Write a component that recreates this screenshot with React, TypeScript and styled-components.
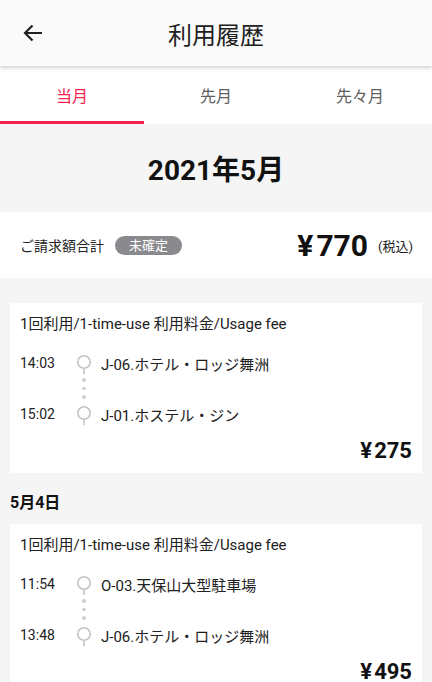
import styled, { createGlobalStyle } from "styled-components";

const GlobalStyle = createGlobalStyle`
  body {
    margin: 0;
    background: #f5f5f5;
    font-family: Roboto, "Noto Sans CJK JP", sans-serif;
    color: #212121;
  }
`;

type Ride = {
  title: string;
  from: { time: string; place: string };
  to: { time: string; place: string };
  price: string;
};

const days: { label?: string; rides: Ride[] }[] = [
  {
    rides: [
      {
        title: "1回利用/1-time-use 利用料金/Usage fee",
        from: { time: "14:03", place: "J-06.ホテル・ロッジ舞洲" },
        to: { time: "15:02", place: "J-01.ホステル・ジン" },
        price: "275",
      },
    ],
  },
  {
    label: "5月4日",
    rides: [
      {
        title: "1回利用/1-time-use 利用料金/Usage fee",
        from: { time: "11:54", place: "O-03.天保山大型駐車場" },
        to: { time: "13:48", place: "J-06.ホテル・ロッジ舞洲" },
        price: "495",
      },
    ],
  },
];

function Pin() {
  return (
    <svg width="16" height="22" viewBox="0 0 16 22">
      <circle cx="8" cy="8" r="6.2" fill="none" stroke="#c4c4c4" strokeWidth="1.6" />
      <line x1="8" y1="14.2" x2="8" y2="20" stroke="#c4c4c4" strokeWidth="1.6" />
    </svg>
  );
}

export default function App() {
  return (
    <>
      <GlobalStyle />
      <Page>
        <Header>
          <BackButton>
            <svg width="24" height="24" viewBox="0 0 24 24">
              <path
                d="M21 12H4M11.5 4.5L4 12l7.5 7.5"
                fill="none"
                stroke="#212121"
                strokeWidth="2.2"
              />
            </svg>
          </BackButton>
          <Title>利用履歴</Title>
        </Header>
        <Tabs>
          <Tab active>当月</Tab>
          <Tab>先月</Tab>
          <Tab>先々月</Tab>
        </Tabs>
        <Month>2021年5月</Month>
        <Summary>
          <SummaryLabel>ご請求額合計</SummaryLabel>
          <Badge>未確定</Badge>
          <Total>
            <span>¥</span>770
          </Total>
          <Tax>(税込)</Tax>
        </Summary>
        <List>
          {days.map((day, i) => (
            <DayGroup key={i}>
              {day.label && <DayLabel>{day.label}</DayLabel>}
              {day.rides.map((ride, j) => (
                <Card key={j}>
                  <CardTitle>{ride.title}</CardTitle>
                  <Stop>
                    <Time>{ride.from.time}</Time>
                    <Pin />
                    <Place>{ride.from.place}</Place>
                  </Stop>
                  <Dots>
                    <i />
                    <i />
                    <i />
                  </Dots>
                  <Stop>
                    <Time>{ride.to.time}</Time>
                    <Pin />
                    <Place>{ride.to.place}</Place>
                  </Stop>
                  <Price>
                    <span>¥</span>
                    {ride.price}
                  </Price>
                </Card>
              ))}
            </DayGroup>
          ))}
        </List>
      </Page>
    </>
  );
}

const Page = styled.div`
  width: 432px;
  min-height: 682px;
  background: #f5f5f5;
  overflow: hidden;
`;

const Header = styled.div`
  position: relative;
  height: 66px;
  background: #fafafa;
  display: flex;
  align-items: center;
  justify-content: center;
  box-shadow: 0 2px 4px rgba(0, 0, 0, 0.18);
  z-index: 1;
`;

const BackButton = styled.div`
  position: absolute;
  left: 21px;
  top: 21px;
  width: 24px;
  height: 24px;
`;

const Title = styled.h1`
  margin: 0;
  font-size: 24px;
  font-weight: 400;
  color: #212121;
`;

const Tabs = styled.div`
  display: flex;
  height: 58px;
  background: #fff;
`;

const Tab = styled.div<{ active?: boolean }>`
  flex: 1;
  display: flex;
  align-items: center;
  justify-content: center;
  font-size: 16px;
  color: ${(p) => (p.active ? "#f0244f" : "#616161")};
  border-bottom: 3px solid ${(p) => (p.active ? "#f0244f" : "transparent")};
  padding-top: 2px;
`;

const Month = styled.div`
  height: 88px;
  display: flex;
  align-items: center;
  justify-content: center;
  font-size: 28px;
  font-weight: 700;
  color: #111;
`;

const Summary = styled.div`
  height: 66px;
  background: #fff;
  display: flex;
  align-items: center;
  padding: 0 19px 0 20px;
`;

const SummaryLabel = styled.span`
  font-size: 14px;
  color: #212121;
`;

const Badge = styled.span`
  margin-left: 11px;
  background: #8a8a8e;
  color: #fff;
  font-size: 13px;
  border-radius: 10px;
  padding: 1px 14px;
  line-height: 17px;
`;

const Total = styled.span`
  margin-left: auto;
  font-size: 30px;
  font-weight: 700;
  color: #111;
  span {
    font-size: 30px;
    margin-right: 3px;
  }
`;

const Tax = styled.span`
  margin-left: 10px;
  font-size: 13px;
  color: #212121;
`;

const List = styled.div`
  padding: 25px 10px 0;
  display: flex;
  flex-direction: column;
  gap: 20px;
`;

const DayGroup = styled.div`
  display: flex;
  flex-direction: column;
`;

const DayLabel = styled.div`
  font-size: 16px;
  line-height: 20px;
  font-weight: 700;
  color: #111;
  margin-bottom: 11px;
`;

const Card = styled.div`
  background: #fff;
  padding: 11px 10px 10px;
  display: flex;
  flex-direction: column;
`;

const CardTitle = styled.div`
  font-size: 15px;
  line-height: 20px;
  margin-bottom: 18px;
`;

const Stop = styled.div`
  display: flex;
  align-items: center;
  height: 22px;
  font-size: 14px;
  svg {
    margin: 3px 9px 0 0;
  }
`;

const Time = styled.span`
  width: 56px;
`;

const Place = styled.span`
  font-size: 15px;
`;

const Dots = styled.div`
  display: flex;
  flex-direction: column;
  align-items: center;
  justify-content: center;
  gap: 5px;
  width: 16px;
  height: 21px;
  margin: 4px 0 4px 56px;
  i {
    width: 4px;
    height: 4px;
    border-radius: 50%;
    background: #d0d0d0;
  }
`;

const Price = styled.div`
  align-self: flex-end;
  font-size: 22px;
  font-weight: 700;
  color: #111;
  margin-top: 13px;
  span {
    margin-right: 2px;
  }
`;
